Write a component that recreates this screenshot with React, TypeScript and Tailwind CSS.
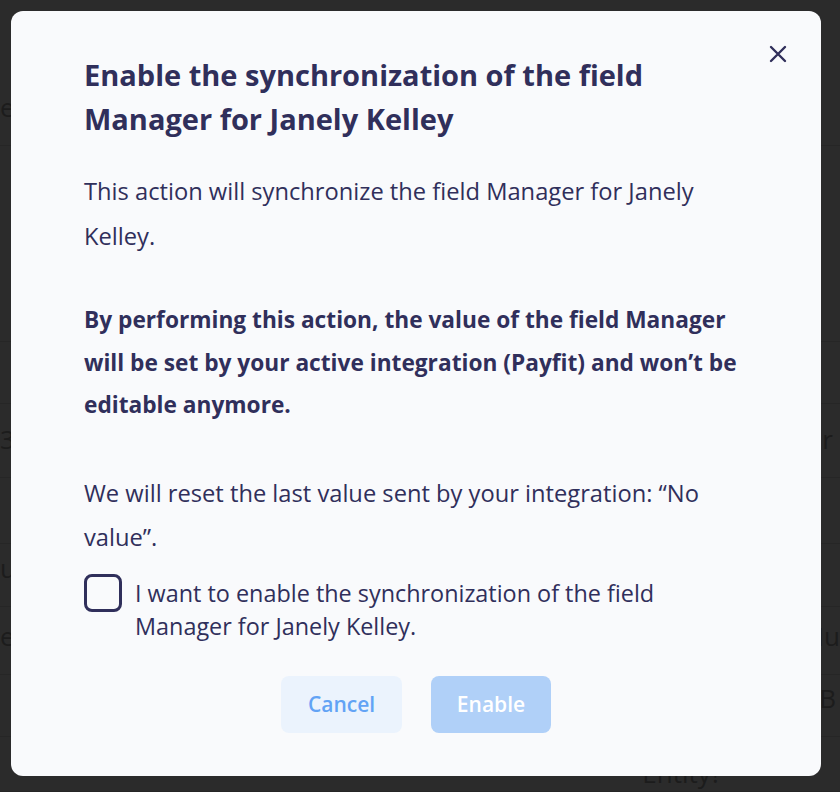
import React from "react";

const rows = [
  { h: "h-[146px]", l: "e", r: "", rp: "pr-0" },
  { h: "h-[196px]", l: "", r: "", rp: "pr-0" },
  { h: "h-[62px]", l: "", r: "", rp: "pr-0" },
  { h: "h-[74px]", l: "3", r: "r", rp: "pr-[7px]" },
  { h: "h-[66px]", l: "", r: "", rp: "pr-0" },
  { h: "h-[63px]", l: "u", r: "", rp: "pr-0" },
  { h: "h-[68px]", l: "e:", r: "Nu", rp: "pr-0" },
  { h: "h-[62px]", l: "", r: "B", rp: "pr-[4px]" },
  { h: "h-[55px]", l: "", r: "", rp: "pr-0" },
];

export default function App() {
  return (
    <div
      className="relative w-[840px] h-[792px] overflow-hidden bg-[#2b2b2b]"
      style={{ fontFamily: "'Open Sans', 'Noto Sans', sans-serif" }}
    >
      {/* faint page behind overlay */}
      <div className="flex flex-col text-[#1c1c1c] text-[26px]">
        {rows.map((r, i) => (
          <div
            key={i}
            className={`${r.h} flex items-end justify-between border-b border-[#262626] pb-[18px]`}
          >
            <span>{r.l}</span>
            <span className={r.rp}>{r.r}</span>
          </div>
        ))}
        <div className="flex justify-end pr-[118px] -mt-[38px]">
          <span>Entity?</span>
        </div>
      </div>

      {/* overlay + modal */}
      <div className="absolute inset-0 pl-[11px] pt-[11px] pr-[19px] pb-[16px] flex">
        <div className="relative flex-1 rounded-[12px] bg-[#f9fafc] px-[73px] pt-[42px] pb-[43px] flex flex-col text-[#302f5b]">
          <button className="absolute right-[33px] top-[33px] w-[20px] h-[20px] flex items-center justify-center">
            <svg width="18" height="18" viewBox="0 0 18 18" fill="none">
              <path d="M2 2L16 16M16 2L2 16" stroke="#302f5b" strokeWidth="2.4" strokeLinecap="round" />
            </svg>
          </button>
          <h1 className="text-[29px] font-bold leading-[44px] pr-[20px]">
            Enable the synchronization of the field Manager for Janely Kelley
          </h1>
          <p className="mt-[28px] text-[23.7px] leading-[45px]">
            This action will synchronize the field Manager for Janely Kelley.
          </p>
          <p className="mt-[40px] text-[22.7px] leading-[42.5px] font-bold">
            By performing this action, the value of the field Manager will be set by your active integration (Payfit) and won’t be editable anymore.
          </p>
          <p className="mt-[44px] text-[23.7px] leading-[44px]">
            We will reset the last value sent by your integration: “No value”.
          </p>
          <label className="mt-[15px] flex items-start gap-[13px]">
            <span className="shrink-0 w-[38px] h-[38px] rounded-[8px] border-[3px] border-[#302f5b]" />
            <span className="mt-[3px] max-w-[560px] text-[23.4px] leading-[33px]">
              I want to enable the synchronization of the field Manager for Janely Kelley.
            </span>
          </label>
          <div className="mt-auto flex justify-center gap-[29px]">
            <button className="w-[121px] h-[57px] rounded-[8px] bg-[#ebf3fd] text-[#62a3f5] text-[21px] font-semibold">
              Cancel
            </button>
            <button className="w-[120px] h-[57px] rounded-[8px] bg-[#b0d0f8] text-white text-[21px] font-semibold">
              Enable
            </button>
          </div>
        </div>
      </div>
    </div>
  );
}
